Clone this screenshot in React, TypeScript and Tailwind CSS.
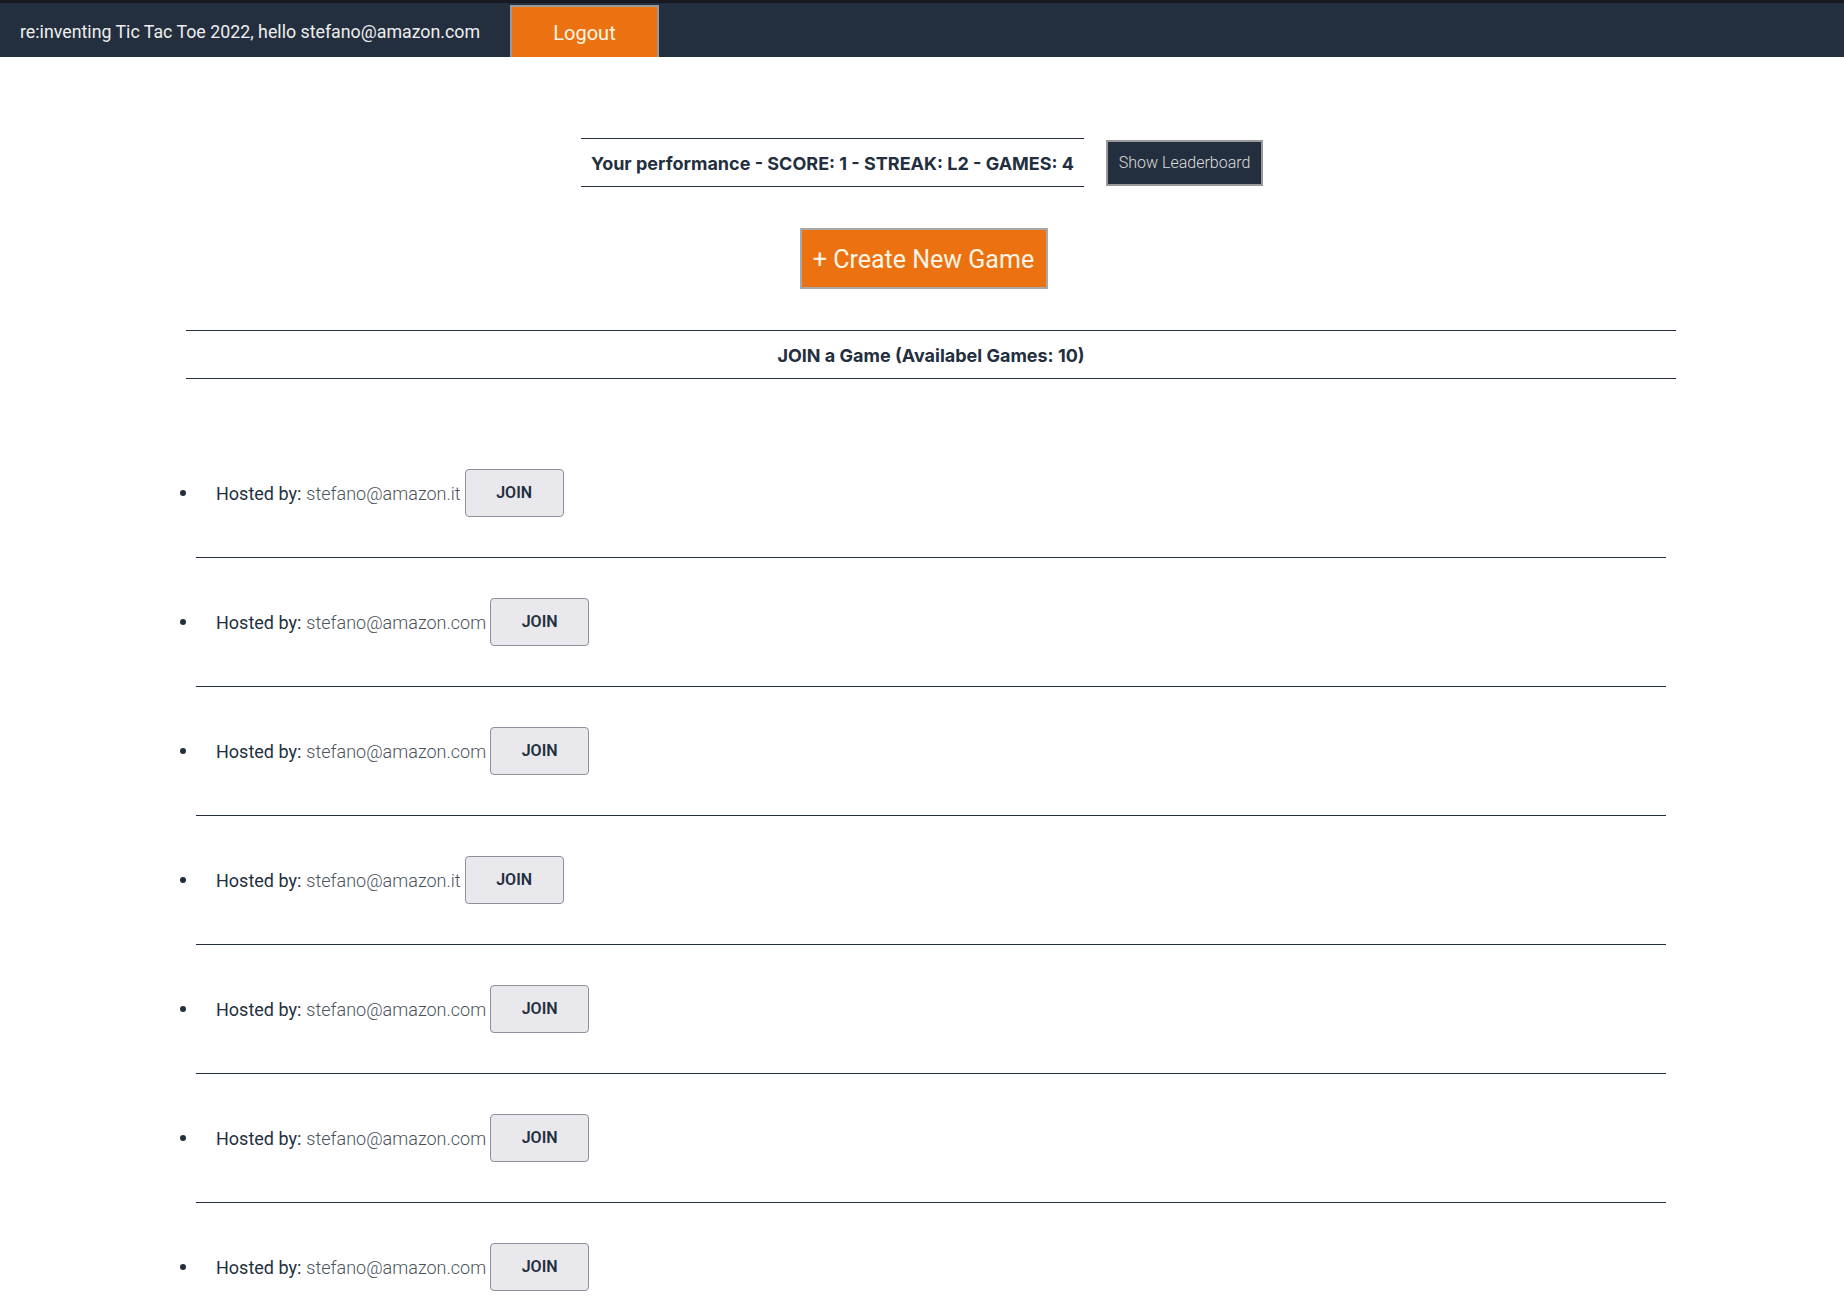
import React from "react";

const games = [
  "stefano@amazon.it",
  "stefano@amazon.com",
  "stefano@amazon.com",
  "stefano@amazon.it",
  "stefano@amazon.com",
  "stefano@amazon.com",
  "stefano@amazon.com",
  "stefano@amazon.com",
  "stefano@amazon.it",
  "stefano@amazon.com",
];

function Header() {
  return (
    <header className="border-t-[3px] border-[#16191f] bg-[#232f3e]">
      <div className="flex h-[54px] items-stretch">
        <div className="flex w-[510px] items-center pl-[20px] pt-[4px] text-[17.8px] text-[#eeeeee]">
          re:inventing Tic Tac Toe 2022, hello stefano@amazon.com
        </div>
        <button className="mt-[2px] w-[149px] border-2 border-b-0 border-[#9a9a9a] bg-[#ec7211] pt-[2px] text-[20px] text-[#fff5e6]">
          Logout
        </button>
      </div>
    </header>
  );
}

function GameRow({ host }: { host: string }) {
  return (
    <li>
      <div className="flex items-center py-[40px]">
        <span className="mr-[30px] h-[6px] w-[6px] rounded-full bg-[#232f3e]" />
        <span className="text-[18px] text-[#232f3e]">Hosted by:</span>
        <span className="ml-[5px] text-[18px] font-light text-[#4a525c]">{host}</span>
        <button className="ml-[4px] h-[48px] w-[99px] rounded-[4px] border border-[#8f8f9d] bg-[#e9e9ed] text-[16px] font-semibold text-[#232f3e]">
          JOIN
        </button>
      </div>
      <div className="ml-[16px] mr-[10px] h-px bg-[#232f3e]" />
    </li>
  );
}

export default function App() {
  return (
    <div className="min-h-screen bg-white font-['Roboto',sans-serif]">
      <Header />
      <main className="pt-[81px]">
        <div className="flex items-center justify-center">
          <div className="flex h-[49px] items-center border-y border-[#232f3e] px-[10px] pt-[2px] font-['Inter',sans-serif] text-[18px] font-bold text-[#232f3e]">
            Your performance - SCORE: 1 - STREAK: L2 - GAMES: 4
          </div>
          <button className="ml-[22px] h-[46px] w-[157px] whitespace-nowrap border-2 border-[#9a9a9a] bg-[#232f3e] text-[16px] font-light text-[#dddddd]">
            Show Leaderboard
          </button>
        </div>
        <div className="mt-[41px] flex justify-center pl-[3px]">
          <button className="h-[61px] w-[248px] whitespace-nowrap border-2 border-[#a8a8a8] bg-[#ec7211] pt-[3px] text-[25px] text-[#fff5e6]">
            + Create New Game
          </button>
        </div>
        <section className="ml-[186px] mt-[41px] w-[1490px]">
          <h2 className="flex h-[49px] items-center justify-center border-y border-[#232f3e] pt-[2px] font-['Inter',sans-serif] text-[18px] font-bold text-[#232f3e]">
            JOIN a Game (Availabel Games: 10)
          </h2>
        </section>
        <ul className="ml-[180px] mt-[50px] w-[1496px]">
          {games.map((g, i) => (
            <GameRow key={i} host={g} />
          ))}
        </ul>
      </main>
    </div>
  );
}
